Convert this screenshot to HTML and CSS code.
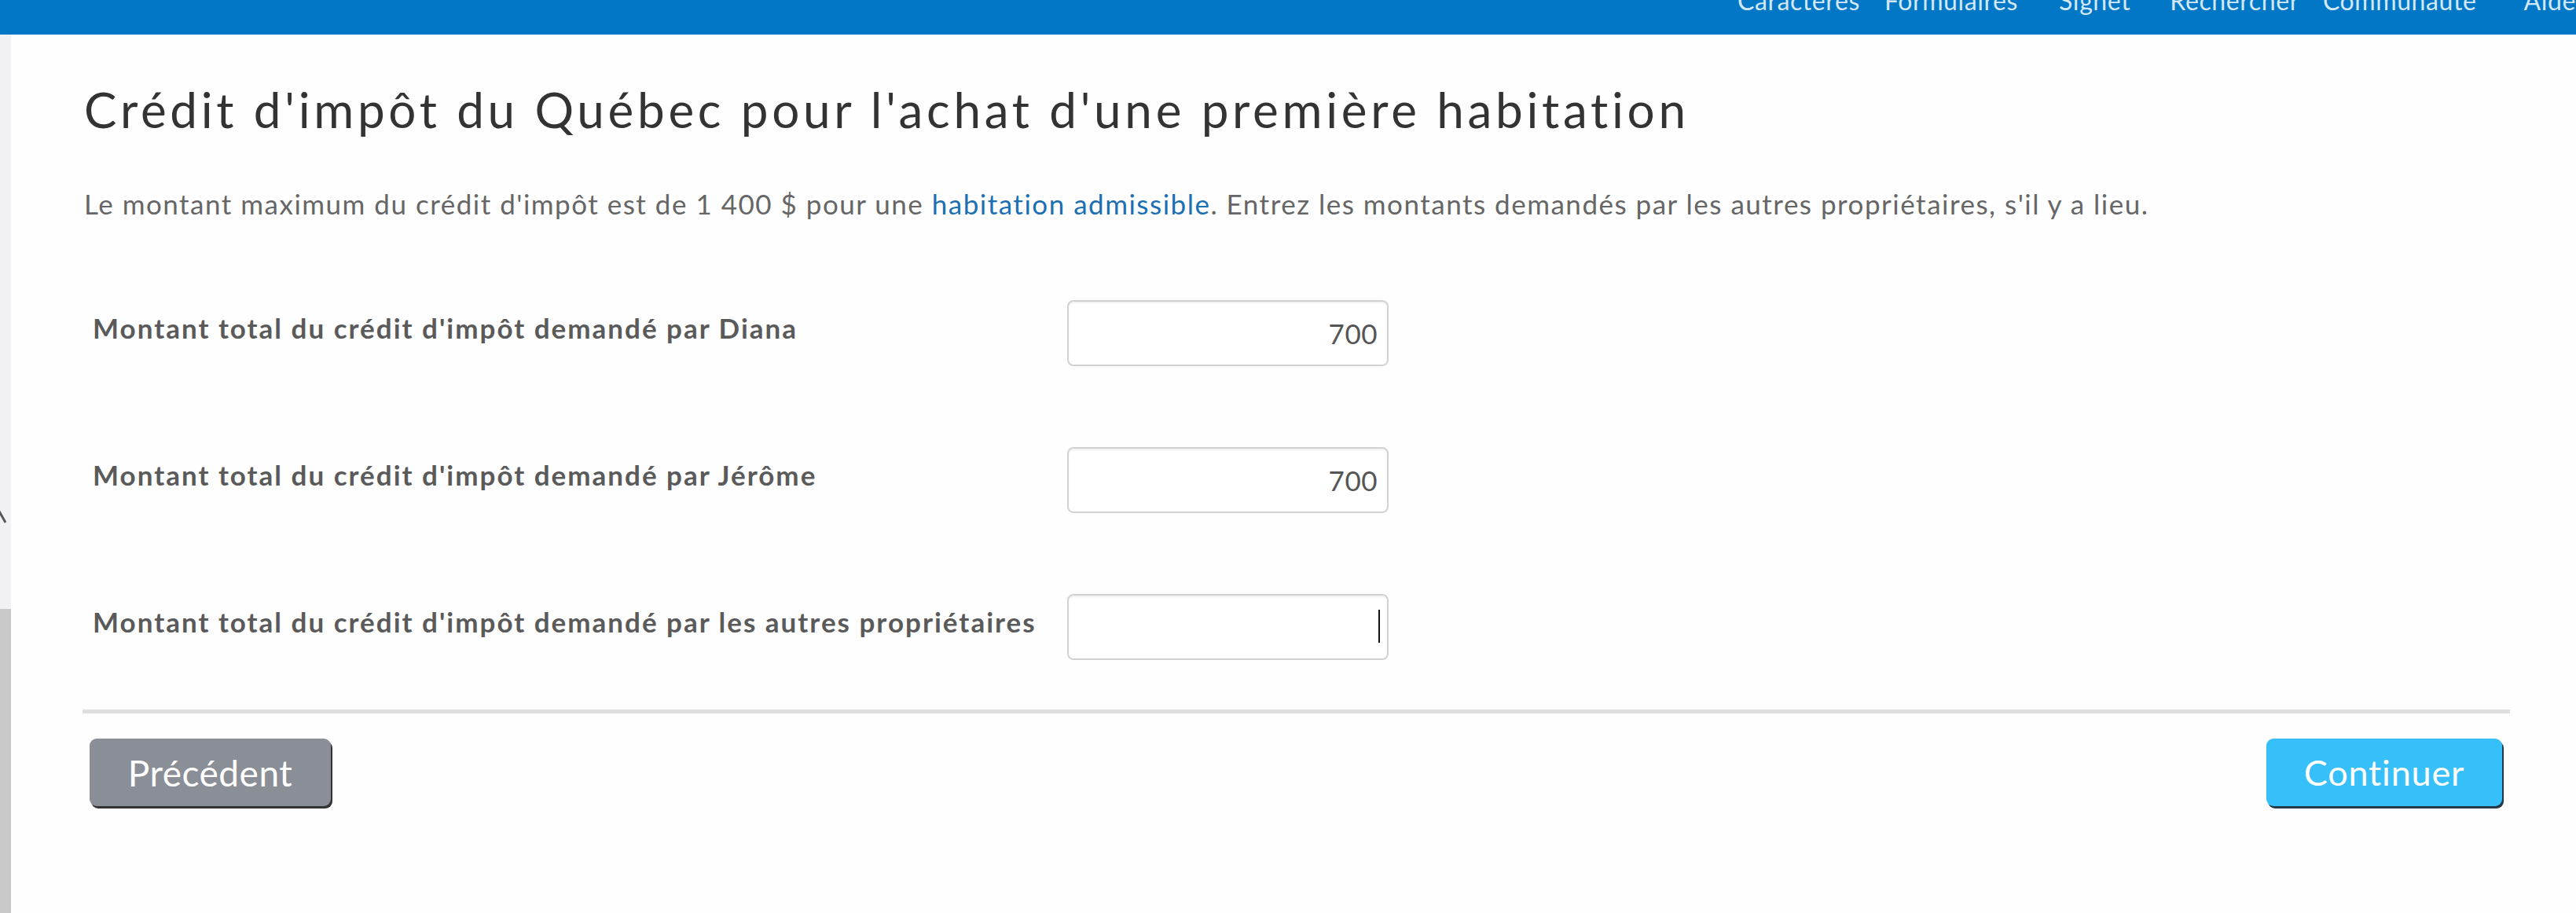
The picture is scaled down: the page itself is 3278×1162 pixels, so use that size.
FILE: index.html
```html
<!DOCTYPE html>
<html lang="fr">
<head>
<meta charset="utf-8">
<title>Crédit d'impôt du Québec pour l'achat d'une première habitation</title>
<link rel="stylesheet" href="styles.css">
</head>
<body>
<header class="topbar">
  <nav class="topnav">
    <a class="topnav-item" href="#">Caractères</a>
    <a class="topnav-item" href="#">Formulaires</a>
    <a class="topnav-item" href="#">Signet</a>
    <a class="topnav-item" href="#">Rechercher</a>
    <a class="topnav-item" href="#">Communauté</a>
    <a class="topnav-item" href="#">Aide</a>
  </nav>
</header>
<div class="layout">
  <aside class="rail">
    <div class="rail-upper">
      <svg class="rail-mark" width="10" height="20" viewBox="0 0 10 20"><path d="M-2 1 L7 17" stroke="#555" stroke-width="3" fill="none"/></svg>
    </div>
    <div class="rail-lower"></div>
  </aside>
  <main class="content">
    <h1 class="title">Crédit d'impôt du Québec pour l'achat d'une première habitation</h1>
    <p class="intro">Le montant maximum du crédit d'impôt est de 1 400 $ pour une <a class="intro-link" href="#">habitation admissible</a>. Entrez les montants demandés par les autres propriétaires, s'il y a lieu.</p>
    <form class="credit-form">
      <div class="field">
        <label class="field-label" for="f1">Montant total du crédit d'impôt demandé par Diana</label>
        <input class="field-input" id="f1" type="text" value="700">
      </div>
      <div class="field">
        <label class="field-label" for="f2">Montant total du crédit d'impôt demandé par Jérôme</label>
        <input class="field-input" id="f2" type="text" value="700">
      </div>
      <div class="field">
        <label class="field-label" for="f3">Montant total du crédit d'impôt demandé par les autres propriétaires</label>
        <div class="input-wrap">
          <input class="field-input" id="f3" type="text" value="">
          <span class="caret"></span>
        </div>
      </div>
    </form>
    <hr class="divider">
    <div class="actions">
      <button class="btn btn-back" type="button">Précédent</button>
      <button class="btn btn-next" type="button">Continuer</button>
    </div>
  </main>
</div>
</body>
</html>
```
FILE: styles.css
```css
* { box-sizing: border-box; }
html, body { margin: 0; padding: 0; }
body {
  background: #fefefe;
  font-family: Lato, "Open Sans", sans-serif;
  color: #333;
  width: 3278px;
  height: 1162px;
  overflow: hidden;
}
.topbar {
  height: 44px;
  background: #0277c5;
  overflow: hidden;
}
.topnav {
  display: flex;
  margin-top: -18px;
  padding-left: 2211px;
  white-space: nowrap;
}
.topnav-item {
  flex: none;
  font-size: 32px;
  letter-spacing: 0.6px;
  line-height: 1.2;
  color: #d3e8f7;
  text-decoration: none;
}
.topnav-item:nth-child(2) { margin-left: 31px; }
.topnav-item:nth-child(3) { margin-left: 52px; }
.topnav-item:nth-child(4) { margin-left: 50px; }
.topnav-item:nth-child(5) { margin-left: 30px; }
.topnav-item:nth-child(6) { margin-left: 60px; }
.layout {
  display: flex;
  height: 1118px;
}
.rail {
  width: 14px;
  flex: none;
  display: flex;
  flex-direction: column;
}
.rail-upper {
  height: 731px;
  background: #f1f1f3;
  padding-top: 604px;
}
.rail-mark { display: block; }
.rail-lower {
  flex: 1;
  background: #c9c9c9;
}
.content {
  flex: 1;
  padding: 58px 84px 0 91px;
}
.title {
  margin: 0 0 0 2px;
  font-size: 62px;
  line-height: 1.2;
  font-weight: 400;
  letter-spacing: 4.7px;
  color: #333;
}
.intro {
  margin: 62px 0 0 2px;
  font-size: 35px;
  line-height: 1.2;
  letter-spacing: 1.5px;
  color: #666;
}
.intro-link { color: #1b6fb3; text-decoration: none; }
.credit-form {
  margin-top: 102px;
  display: flex;
  flex-direction: column;
  gap: 103px;
}
.field {
  display: grid;
  grid-template-columns: 1240px 409px;
  padding-left: 13px;
  align-items: start;
}
.field-label {
  margin-top: 14px;
  font-size: 35px;
  line-height: 1.2;
  font-weight: 700;
  letter-spacing: 2px;
  color: #5a5a5a;
}
.input-wrap { position: relative; }
.field-input {
  display: block;
  width: 409px;
  height: 84px;
  border: 2px solid #d2d2d2;
  border-radius: 8px;
  box-shadow: inset 0 2px 2px rgba(0,0,0,0.06);
  background: #fff;
  padding: 0 12px;
  text-align: right;
  font-family: Lato, sans-serif;
  font-size: 35px;
  letter-spacing: 0.5px;
  color: #555;
  outline: none;
}
.caret {
  position: absolute;
  right: 11px;
  top: 20px;
  width: 2px;
  height: 42px;
  background: #111;
}
.divider {
  margin: 63px 0 0;
  border: 0;
  height: 5px;
  background: #dedede;
}
.actions {
  display: flex;
  justify-content: space-between;
  align-items: center;
  margin-top: 32px;
  padding: 0 10px 0 9px;
}
.btn {
  height: 86px;
  border: 0;
  border-radius: 9px;
  font-family: Lato, sans-serif;
  color: #fff;
  cursor: pointer;
  box-shadow: 2px 3px 0 #333;
}
.btn-back {
  width: 307px;
  background: #8a8e96;
  font-size: 46px;
  letter-spacing: 0.5px;
}
.btn-next {
  width: 300px;
  background: #36bff9;
  font-size: 45px;
  letter-spacing: 0.8px;
  box-shadow: 2px 3px 0 #23394a;
}
```
